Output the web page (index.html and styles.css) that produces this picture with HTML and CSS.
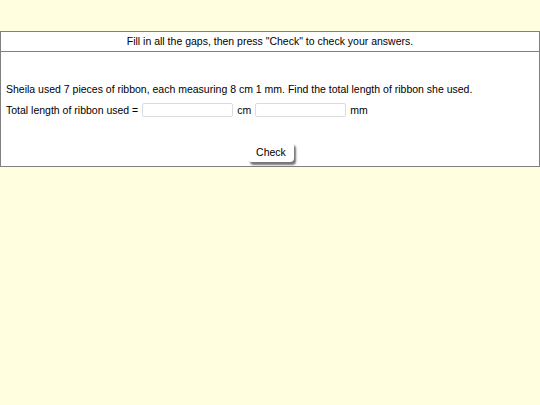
FILE: index.html
```html
<!DOCTYPE html>
<html>
<head>
<meta charset="utf-8">
<link rel="stylesheet" href="styles.css">
</head>
<body>
<div class="quiz">
  <div class="instructions">Fill in all the gaps, then press "Check" to check your answers.</div>
  <div class="panel">
    <p class="question">Sheila used 7 pieces of ribbon, each measuring 8 cm 1 mm. Find the total length of ribbon she used.</p>
    <div class="answer">
      <span>Total length of ribbon used =</span>
      <input class="gap" type="text">
      <span>cm</span>
      <input class="gap" type="text">
      <span>mm</span>
    </div>
    <div class="actions"><button class="check">Check</button></div>
  </div>
</div>
</body>
</html>
```
FILE: styles.css
```css
html, body {
  margin: 0;
  padding: 0;
  background: #ffffe0;
  font-family: "Liberation Sans", Arial, sans-serif;
  font-size: 10.5px;
  color: #000;
}
.quiz {
  margin-top: 31px;
}
.instructions {
  border: 1px solid #808080;
  background: #fff;
  text-align: center;
  height: 19px;
  line-height: 19px;
}
.panel {
  border: 1px solid #808080;
  border-top: none;
  background: #fff;
  padding: 30px 5px 4px 5px;
}
.question {
  margin: 0;
  line-height: 14px;
}
.answer {
  display: flex;
  align-items: center;
  gap: 4px;
  margin-top: 7px;
  height: 14px;
}
.gap {
  width: 91px;
  height: 14px;
  box-sizing: border-box;
  border: 1px solid #dcdcdc;
  border-radius: 2px;
  padding: 0;
  margin: 0;
  background: #fff;
}
.actions {
  display: flex;
  justify-content: center;
  margin-top: 25px;
}
.check {
  font-family: "Liberation Sans", Arial, sans-serif;
  font-size: 10.5px;
  color: #000;
  background: #fff;
  border: none;
  border-radius: 4px;
  padding: 3px 8px;
  height: 20px;
  box-shadow: 2px 3px 2px #777;
  margin-left: 2px;
}
```
